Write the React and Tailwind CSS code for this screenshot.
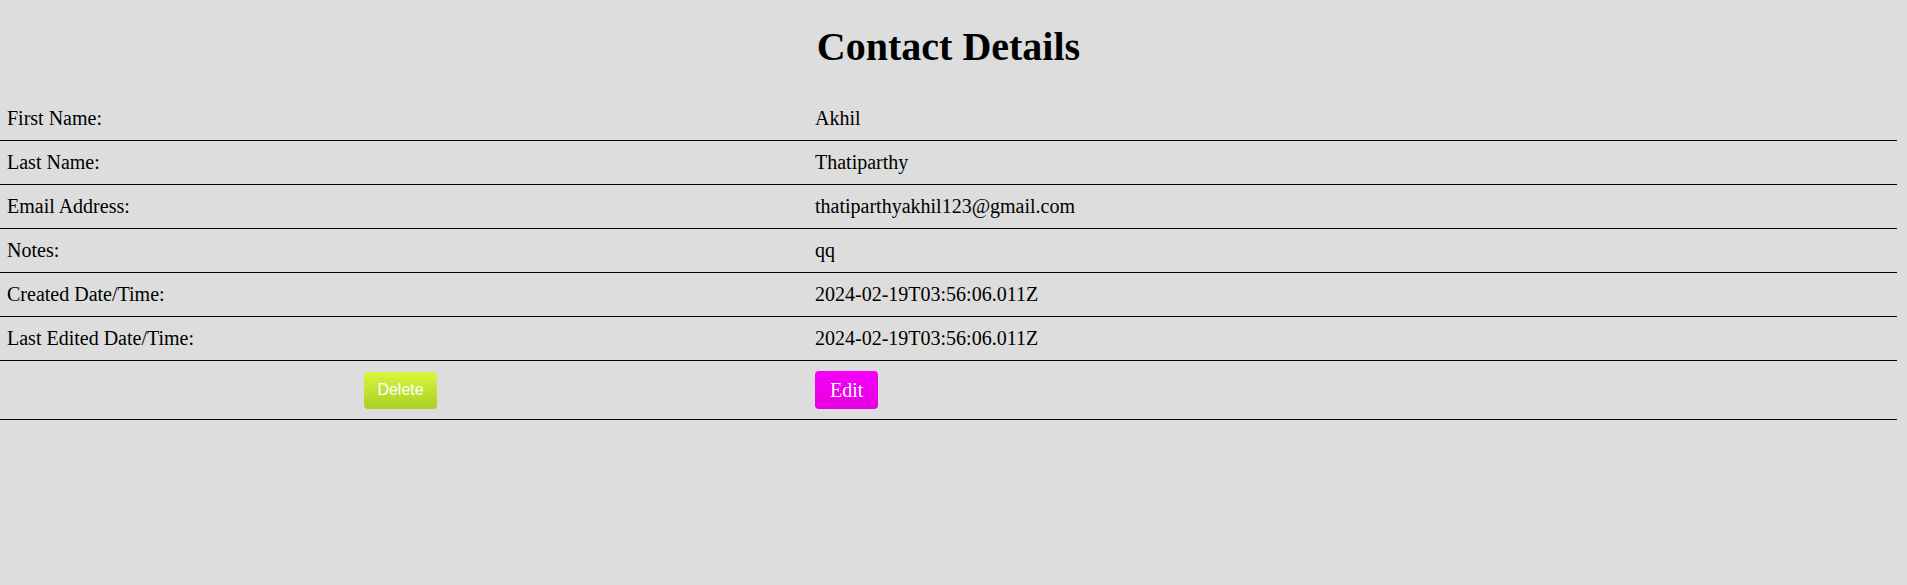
export default function App() {
  const rows = [
    ["First Name:", "Akhil"],
    ["Last Name:", "Thatiparthy"],
    ["Email Address:", "thatiparthyakhil123@gmail.com"],
    ["Notes:", "qq"],
    ["Created Date/Time:", "2024-02-19T03:56:06.011Z"],
    ["Last Edited Date/Time:", "2024-02-19T03:56:06.011Z"],
  ];
  return (
    <div
      className="min-h-[585px] w-full bg-[#dddddd] text-black"
      style={{ fontFamily: '"Liberation Serif", "Times New Roman", serif' }}
    >
      <div className="w-[1897px] overflow-hidden">
        <h1 className="mt-[24px] mb-[27px] text-center text-[40px] font-bold leading-[46px]">
          Contact Details
        </h1>
        <div className="flex flex-col">
          {rows.map(([label, value]) => (
            <div
              key={label}
              className="grid grid-cols-[808px_1fr] border-b border-black text-[20px] leading-[23px]"
            >
              <div className="px-[7px] py-[10px]">{label}</div>
              <div className="px-[7px] py-[10px]">{value}</div>
            </div>
          ))}
          <div className="grid grid-cols-[808px_1fr] border-b border-black">
            <div className="flex items-center justify-center py-[10px] pr-[7px]">
              <button
                className="h-[37px] rounded-[4px] bg-gradient-to-b from-[#d9f63c] to-[#aacf28] px-[13px] text-[16px] leading-[18px] text-white"
                style={{ fontFamily: '"Liberation Sans", Arial, sans-serif' }}
              >
                Delete
              </button>
            </div>
            <div className="flex items-center px-[7px] py-[10px]">
              <button className="h-[38px] rounded-[4px] bg-gradient-to-b from-[#f500f8] to-[#e600e0] px-[15px] text-[20px] leading-[23px] text-white">
                Edit
              </button>
            </div>
          </div>
        </div>
      </div>
    </div>
  );
}
